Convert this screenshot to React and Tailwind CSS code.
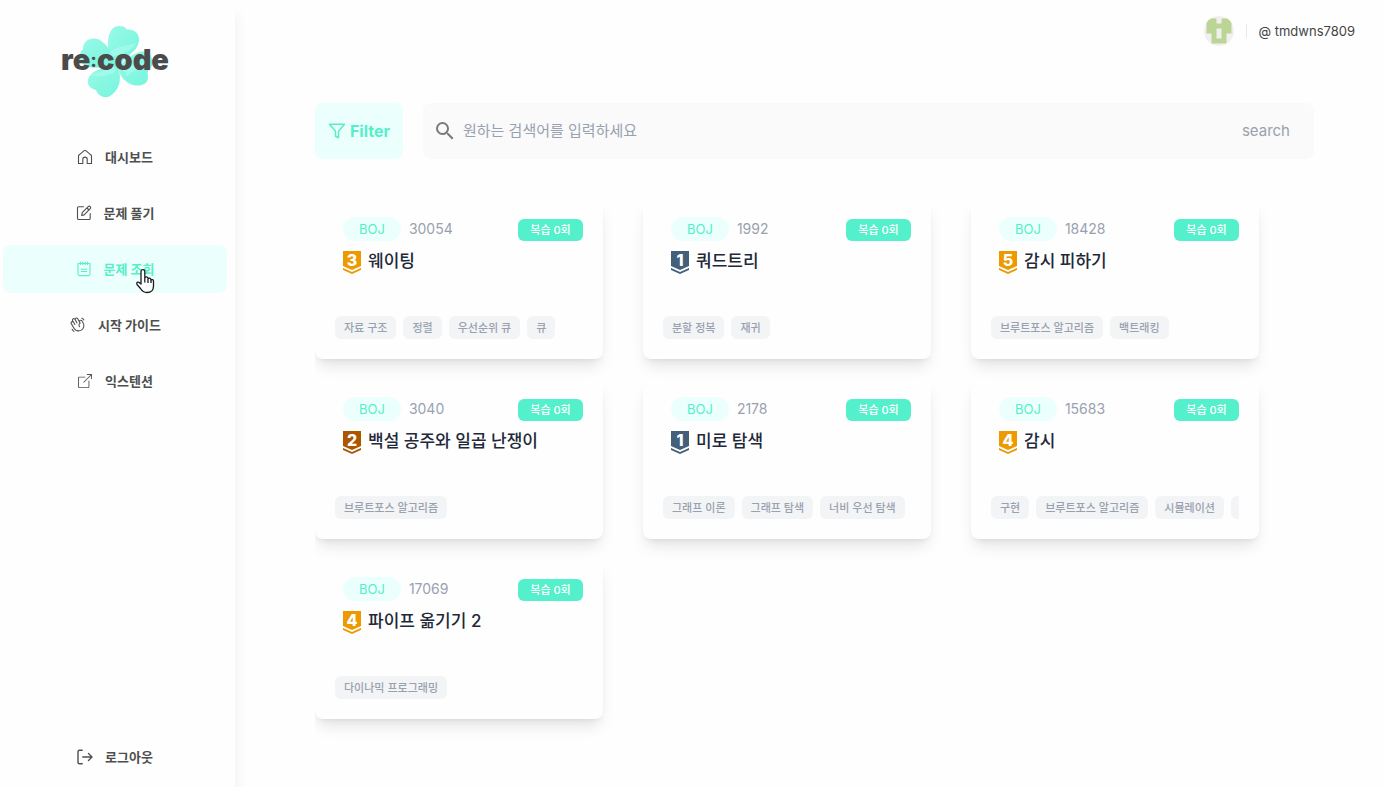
import React from "react";
import { PiHandWaving } from "react-icons/pi";
import { BsBoxArrowUpRight } from "react-icons/bs";
import { FiFilter } from "react-icons/fi";
import { MdSearch } from "react-icons/md";

function LineIcon({ children }) {
  return (
    <svg
      viewBox="0 0 16 16"
      className="size-4"
      fill="none"
      stroke="currentColor"
      strokeWidth="1.1"
      strokeLinecap="round"
      strokeLinejoin="round"
      aria-hidden="true"
    >
      {children}
    </svg>
  );
}

function HomeIcon() {
  return (
    <LineIcon>
      <path d="M1.500 7.200c0-.6.2-1 .7-1.400L7.200 1.600c.5-.4 1.100-.4 1.600 0l5 4.200c.5.400.7.800.7 1.400v7.300h-4.300v-4.200a2.200 2.200 0 0 0-4.400 0v4.200H1.500Z" />
    </LineIcon>
  );
}

function EditIcon() {
  return (
    <LineIcon>
      <path d="M7.500 1.800H2.800c-.8 0-1.300.5-1.300 1.300v10.100c0 .8.5 1.300 1.300 1.300h10.100c.8 0 1.300-.5 1.300-1.300V8.500" />
      <path d="M5.700 10.500l.5-2.800 6-6c.6-.6 1.400-.6 2 0s.6 1.400 0 2l-6 6.200-2.500.6ZM11 3l2 2" />
    </LineIcon>
  );
}

function NotepadIcon() {
  return (
    <LineIcon>
      <path d="M2 2.500h12v10.300c0 1.100-.7 1.800-1.800 1.800H3.800c-1.100 0-1.800-.7-1.800-1.800ZM4.500 1v2.500M6.800 1v2.500M9.200 1v2.500M11.500 1v2.500M5.300 8.200h5.400M5.300 10.500h5.400" />
    </LineIcon>
  );
}

function WaveIcon() {
  return <PiHandWaving className="size-[17px]" aria-hidden="true" />;
}

function ExternalIcon() {
  return (
    <span className="flex size-4 items-center justify-center">
      <BsBoxArrowUpRight className="size-3.5" aria-hidden="true" />
    </span>
  );
}

function LogoutIcon() {
  return (
    <svg
      viewBox="0 0 16 16"
      className="size-4"
      fill="none"
      stroke="currentColor"
      strokeWidth="1.4"
      strokeLinecap="round"
      strokeLinejoin="round"
      aria-hidden="true"
    >
      <path d="M5.200 1.300H2.500C1.500 1.300 1 1.800 1 2.800v10.400c0 1 .5 1.500 1.500 1.500h2.700M5.800 8h9.200M11.500 4.500 15 8l-3.500 3.500" />
    </svg>
  );
}

const NAV = [
  { label: "대시보드", icon: HomeIcon },
  { label: "문제 풀기", icon: EditIcon },
  { label: "문제 조회", icon: NotepadIcon, active: true },
  { label: "시작 가이드", icon: WaveIcon },
  { label: "익스텐션", icon: ExternalIcon },
];

const GOLD = "#ec9a00";
const SILVER = "#435f7a";
const BRONZE = "#ad5600";

const PROBLEMS = [
  { id: 30054, title: "웨이팅", level: 3, color: GOLD, tags: ["자료 구조", "정렬", "우선순위 큐", "큐"] },
  { id: 1992, title: "쿼드트리", level: 1, color: SILVER, tags: ["분할 정복", "재귀"] },
  { id: 18428, title: "감시 피하기", level: 5, color: GOLD, tags: ["브루트포스 알고리즘", "백트래킹"] },
  { id: 3040, title: "백설 공주와 일곱 난쟁이", level: 2, color: BRONZE, tags: ["브루트포스 알고리즘"] },
  { id: 2178, title: "미로 탐색", level: 1, color: SILVER, tags: ["그래프 이론", "그래프 탐색", "너비 우선 탐색"] },
  { id: 15683, title: "감시", level: 4, color: GOLD, tags: ["구현", "브루트포스 알고리즘", "시뮬레이션", ""] },
  { id: 17069, title: "파이프 옮기기 2", level: 4, color: GOLD, tags: ["다이나믹 프로그래밍"] },
];

function Logo() {
  return (
    <a href="#" aria-label="re:code" className="relative flex h-[76px] w-28 items-center justify-center">
      <svg viewBox="0 0 112 76" className="absolute inset-0 h-full w-full" aria-hidden="true">
        <defs>
          <linearGradient id="leaf" x1="0" y1="0" x2="1" y2="1">
            <stop offset="0" stopColor="#98fae7" />
            <stop offset="1" stopColor="#76f4dd" />
          </linearGradient>
        </defs>
        <g fill="url(#leaf)">
          <path d="M59 46C52 37 49 30 49 22 49 11 53 4 60 4c4 0 6 1 8 3.500 7-.5 12 3.500 12 9.500 0 13-13 15-21 29Z" />
          <path d="M59 46C56 34 49 23 41 18c-8-4-17 0-17 9-5 5-4 14 3 17 10 4 21 0 32 2Z" />
          <path d="M59 46C46 44 34 48 30 55c-3 6 0 12 7 13 2 6 9 9 14 6 10-6 12-18 8-28Z" />
          <path d="M59 46c2 9 8 15 15 17 8 2 15-1 15-8 0-3-1-4 0-6 6-5 6-13 0-18-7-5-21 4-30 15Z" />
        </g>
        <g fill="#b8fff2" opacity="0.45">
          <path d="M51 30c7-6 17-6 26-9-3 8-13 10-25 14Z" />
          <path d="M31 53c8 2 20 2 26-4l-3-6c-7 6-16 8-23 10Z" />
          <path d="M68 54c6-5 13-9 22-9l-3-5c-9 1-17 3-23 8Z" />
        </g>
      </svg>
      <span className="relative flex items-center text-[29px] font-black leading-8 text-[#4b4b4b]">
        re
        <span className="text-xl font-bold">:</span>
        code
      </span>
    </a>
  );
}

function NavButton({ icon: Icon, label, active }) {
  return (
    <button
      type="button"
      className={
        active
          ? "flex h-12 w-full items-center justify-center gap-3 rounded-lg bg-[#ebfffd] pb-px text-[#56efc9]"
          : "flex h-12 w-full items-center justify-center gap-3 rounded-lg pb-px text-[#4f4f4f]"
      }
    >
      <Icon />
      <span className="text-[13px] font-bold leading-5">{label}</span>
    </button>
  );
}

function Tier({ level, color }) {
  return (
    <svg viewBox="0 0 18 23" className="h-[23px] w-[18px] shrink-0" role="img" aria-label={`Level ${level}`}>
      <path d="M0 0h18v15l-9 4-9-4Z" fill={color} />
      <path d="M0 17l9 4 9-4v2l-9 4-9-4Z" fill={color} />
      <text x="9" y="15" textAnchor="middle" fill="#fff" fontSize="16" fontWeight="800">
        {level}
      </text>
    </svg>
  );
}

function ProblemCard({ problem }) {
  return (
    <article className="flex h-40 flex-col rounded-lg bg-[#fefefe] px-5 pt-[18px] pb-5 shadow-lg">
      <div className="flex h-6 items-end gap-2 pl-2">
        <span className="rounded-full bg-[#ebfffd] px-4 text-[13px] leading-6 text-[#56efc9]">BOJ</span>
        <span className="text-sm leading-6 text-gray-400">{problem.id}</span>
        <span className="ml-auto w-[65px] rounded-md bg-[#54f0cb] text-center text-[11px] font-medium leading-[22px] text-white">
          복습 0회
        </span>
      </div>
      <h2 className="mt-2.5 flex items-start gap-[7px] pl-2 text-[17px] font-medium leading-[21px] text-gray-800">
        <Tier level={problem.level} color={problem.color} />
        {problem.title}
      </h2>
      <ul className="mt-auto flex gap-[7px] overflow-hidden">
        {problem.tags.map((tag) => (
          <li
            key={tag}
            className="h-[23px] shrink-0 rounded-md bg-gray-100 px-[9px] text-[11px] font-medium leading-6 text-gray-400"
          >
            {tag}
          </li>
        ))}
      </ul>
    </article>
  );
}

function Cursor() {
  return (
    <svg viewBox="0 0 20 26" className="pointer-events-none absolute top-[23px] left-[132px] h-[26px] w-5" aria-hidden="true">
      <path
        d="M6 16V3.500a1.900 1.900 0 0 1 3.800 0V10a1.700 1.700 0 0 1 3.200 0v1a1.600 1.600 0 0 1 2.900.3v1a1.400 1.400 0 0 1 2.600.8V18c0 4-2.500 6.500-6.500 6.500-3.500 0-5-1.500-6.500-4L2 16.500c-1-2 1-3 2.200-2L6 16ZM9.800 10v4.500M13 11v4M16 12v3"
        fill="#fff"
        stroke="#1a1a1f"
        strokeWidth="1.3"
        strokeLinejoin="round"
      />
    </svg>
  );
}

export default function App() {
  return (
    <div className="flex min-h-screen bg-[#fefefe] font-['Inter','Noto_Sans_CJK_KR',sans-serif]">
      <aside className="flex w-[235px] shrink-0 flex-col bg-[#fefefe] pr-2 pb-1.5 pl-[3px] shadow-[4px_14px_10px_rgba(0,0,0,0.04)]">
        <div className="flex justify-center pt-[22px]">
          <Logo />
        </div>
        <nav className="mt-[35px] flex flex-col gap-2">
          {NAV.map((item) => (
            <div key={item.label} className="relative">
              <NavButton {...item} />
              {item.active && <Cursor />}
            </div>
          ))}
        </nav>
        <div className="mt-auto">
          <NavButton icon={LogoutIcon} label="로그아웃" />
        </div>
      </aside>

      <div className="flex min-w-0 flex-1 flex-col">
        <header className="flex h-[61px] items-center justify-end pr-[30px]">
          <svg viewBox="0 0 30 30" className="size-[30px] rounded-full" role="img" aria-label="tmdwns7809">
            <path d="M0 0h30v30H0Z" fill="#f0f0f0" />
            <path d="M2.500 2.500h10v5h5v-5h10v15h-5v10h-15v-10h-5Zm10 10v10h5v-10Z" fill="#bcd595" fillRule="evenodd" />
          </svg>
          <span className="mr-3 ml-3 h-3.5 w-px bg-gray-200" />
          <span className="text-[13px] leading-5 text-[#444444]">@ tmdwns7809</span>
        </header>

        <main className="pt-[42px] pr-[71px] pl-20">
          <div className="flex h-14 gap-5">
            <button
              type="button"
              className="flex w-[88px] items-center justify-center gap-1 rounded-lg bg-[#ebfffd] pb-px text-base font-bold text-[#56efc9]"
            >
              <FiFilter className="size-[18px]" aria-hidden="true" />
              Filter
            </button>
            <form className="flex min-w-0 flex-1 items-center rounded-lg bg-[#fafafa] pr-6 pl-2.5">
              <MdSearch className="size-6 text-[#7a7a7a]" aria-hidden="true" />
              <input
                type="text"
                aria-label="검색어"
                placeholder="원하는 검색어를 입력하세요"
                className="ml-1.5 min-w-0 flex-1 bg-transparent text-[15px] placeholder:text-gray-400 focus:outline-none"
              />
              <button type="button" className="text-[15px] text-gray-400">
                search
              </button>
            </form>
          </div>
          <section className="mt-5 grid grid-cols-[repeat(auto-fill,288px)] gap-x-10 gap-y-5 overflow-hidden pt-5 pb-10">
            {PROBLEMS.map((problem) => (
              <ProblemCard key={problem.id} problem={problem} />
            ))}
          </section>
        </main>
      </div>
    </div>
  );
}
